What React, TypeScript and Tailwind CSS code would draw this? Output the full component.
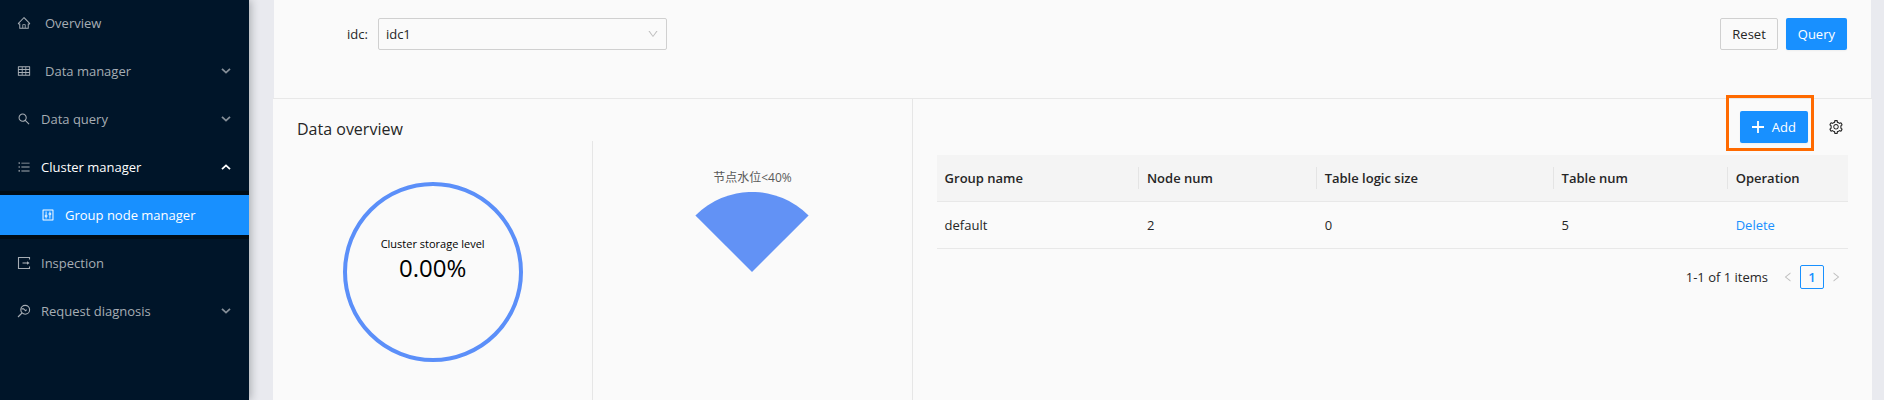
import type { ReactNode } from "react";
import {
  AiOutlineControl,
  AiOutlineDown,
  AiOutlineHome,
  AiOutlineLeft,
  AiOutlineRight,
  AiOutlineSearch,
  AiOutlineSetting,
  AiOutlineTable,
  AiOutlineUnorderedList,
} from "react-icons/ai";

const columns = ["Group name", "Node num", "Table logic size", "Table num", "Operation"];
const rows = [{ name: "default", nodes: 2, size: 0, tables: 5 }];

function InspectionIcon() {
  return (
    <svg viewBox="0 0 14 14" className="size-3.5 shrink-0" fill="none" stroke="currentColor" aria-hidden>
      <path d="M12.5 3.5v-2H1.5v11h11v-2" strokeWidth="1.1" />
      <path d="M5.5 7H11" strokeWidth="1.1" />
      <path d="M10 5.2 12.6 7 10 8.8Z" fill="currentColor" stroke="none" />
    </svg>
  );
}

function DiagnosisIcon() {
  return (
    <svg
      viewBox="0 0 14 14"
      className="size-3.5 shrink-0"
      fill="none"
      stroke="currentColor"
      strokeWidth="1.1"
      aria-hidden
    >
      <circle cx="8.2" cy="5.8" r="4.4" />
      <path d="M5 9 1 13" />
      <path d="M4.4 4.9h2.2l2 1.9 1-1.1" />
    </svg>
  );
}

type MenuItemProps = {
  icon: ReactNode;
  label: string;
  wide?: boolean;
  arrow?: "up" | "down";
  active?: boolean;
};

function MenuItem({ icon, label, wide, arrow, active }: MenuItemProps) {
  const className = `flex h-12 w-full items-center pl-[17px] pr-[18px] text-left ${
    active ? "text-white" : "text-[#a6adb4]"
  }`;
  const content = (
    <>
      {icon}
      <span className={wide ? "ml-3.5" : "ml-2.5"}>{label}</span>
    </>
  );

  if (!arrow) {
    return (
      <a href="#" className={className}>
        {content}
      </a>
    );
  }

  return (
    <button type="button" className={className} aria-expanded={arrow === "up"}>
      {content}
      <svg
        viewBox="0 0 10 6"
        className={`ml-auto h-1.5 w-2.5 ${arrow === "up" ? "rotate-180" : "opacity-80"}`}
        fill="none"
        stroke="currentColor"
        strokeWidth="1.8"
        aria-hidden
      >
        <path d="M1 .8 5 4.6 9 .8" />
      </svg>
    </button>
  );
}

function Sidebar() {
  return (
    <aside className="z-10 w-[249px] shrink-0 bg-[#001529] shadow-[2px_0_8px_rgba(29,35,41,0.3)]">
      <nav aria-label="Main" className="-mt-px">
        <MenuItem wide icon={<AiOutlineHome className="size-3.5" />} label="Overview" />
        <MenuItem wide arrow="down" icon={<AiOutlineTable className="size-3.5" />} label="Data manager" />
        <MenuItem arrow="down" icon={<AiOutlineSearch className="size-3.5" />} label="Data query" />
        <MenuItem
          active
          arrow="up"
          icon={<AiOutlineUnorderedList className="size-3.5 text-[#a6adb4]" />}
          label="Cluster manager"
        />
        <div className="bg-[#000c17] py-1">
          <a href="#" className="flex h-10 items-center gap-2.5 bg-[#1890ff] pl-[41px] text-white">
            <AiOutlineControl className="size-3.5" />
            Group node manager
          </a>
        </div>
        <MenuItem icon={<InspectionIcon />} label="Inspection" />
        <MenuItem arrow="down" icon={<DiagnosisIcon />} label="Request diagnosis" />
      </nav>
    </aside>
  );
}

function FilterBar() {
  return (
    <form className="flex h-[98px] items-start justify-between pl-[73px] pr-6 pt-[18px]">
      <div className="flex items-center gap-2.5">
        <label htmlFor="idc">idc:</label>
        <div className="relative">
          <select
            id="idc"
            className="h-8 w-[289px] appearance-none rounded-xs border border-[#d0d0d0] bg-[#fafafa] px-[7px]"
          >
            <option>idc1</option>
          </select>
          <AiOutlineDown className="pointer-events-none absolute right-2 top-2.5 size-3 text-[#bfbfbf]" />
        </div>
      </div>
      <div className="flex gap-2">
        <button type="button" className="h-8 rounded-xs border border-[#d0d0d0] px-[11px]">
          Reset
        </button>
        <button type="submit" className="h-8 rounded-xs bg-[#1890ff] px-3 text-white shadow-xs">
          Query
        </button>
      </div>
    </form>
  );
}

function DataOverview() {
  return (
    <section className="flex w-[40%] flex-col border-r border-[#e6e6e6]">
      <h2 className="px-6 pt-[18px] text-base leading-6">Data overview</h2>
      <div className="flex flex-1">
        <div className="flex w-1/2 justify-center pt-[41px]">
          <div className="flex size-[180px] flex-col items-center rounded-full border-4 border-[#5b8ff9] pt-12 text-black">
            <span className="text-[11px] leading-5">Cluster storage level</span>
            <span className="text-2xl leading-7">0.00%</span>
          </div>
        </div>
        <div className="flex w-1/2 flex-col items-center border-l border-[#e6e6e6] pt-[27px]">
          <span className="text-xs leading-5 text-[#595959]">节点水位&lt;40%</span>
          <svg viewBox="0 0 114 80" className="mt-1 h-20 w-[114px]" role="img" aria-label="节点水位">
            <path d="M57 80 .4 23.4A80 80 0 0 1 113.6 23.4Z" fill="#6292f5" />
          </svg>
        </div>
      </div>
    </section>
  );
}

function GroupTable() {
  return (
    <section className="flex-1 px-6">
      <div className="flex items-center justify-end gap-5 pt-3 pb-3 pr-1">
        <div className="relative">
          <button
            type="button"
            className="flex h-8 items-center gap-2 rounded-xs bg-[#1890ff] px-3 text-white shadow-xs"
          >
            <svg viewBox="0 0 12 12" className="size-3" stroke="currentColor" strokeWidth="1.8" aria-hidden>
              <path d="M6 0v12M0 6h12" />
            </svg>
            Add
          </button>
          <span className="pointer-events-none absolute -bottom-2 -left-3.5 -right-1.5 -top-4 border-3 border-[#ff6a00]" />
        </div>
        <button type="button" aria-label="Table settings">
          <AiOutlineSetting className="size-4" />
        </button>
      </div>
      <table className="w-full table-fixed border-separate border-spacing-0 text-left">
        <colgroup>
          <col className="w-[22.2%]" />
          <col className="w-[19.5%]" />
          <col className="w-[26%]" />
          <col className="w-[19.1%]" />
          <col />
        </colgroup>
        <thead>
          <tr className="bg-[#f4f4f4]">
            {columns.map((column, i) => (
              <th key={column} className="h-[47px] border-b border-[#e8e8e8] font-semibold">
                <div
                  className={`flex h-[22px] items-center pl-2 ${
                    i < columns.length - 1 ? "border-r border-[#e4e4e4]" : ""
                  }`}
                >
                  {column}
                </div>
              </th>
            ))}
          </tr>
        </thead>
        <tbody>
          {rows.map((row) => (
            <tr key={row.name} className="[&>td]:h-[47px] [&>td]:border-b [&>td]:border-[#e8e8e8] [&>td]:pl-2">
              <td>{row.name}</td>
              <td>{row.nodes}</td>
              <td>{row.size}</td>
              <td>{row.tables}</td>
              <td>
                <a href="#" className="text-[#1890ff]">
                  Delete
                </a>
              </td>
            </tr>
          ))}
        </tbody>
      </table>
      <nav aria-label="Pagination" className="mt-4 flex items-center justify-end">
        <span className="mr-2">1-1 of 1 items</span>
        <button type="button" aria-label="Previous page" className="flex size-6 items-center justify-center text-[#bfbfbf]">
          <AiOutlineLeft className="size-3" />
        </button>
        <button
          type="button"
          aria-current="page"
          className="flex size-6 items-center justify-center rounded-xs border border-[#1890ff] font-semibold text-[#1890ff]"
        >
          1
        </button>
        <button type="button" aria-label="Next page" className="flex size-6 items-center justify-center text-[#bfbfbf]">
          <AiOutlineRight className="size-3" />
        </button>
      </nav>
    </section>
  );
}

export default function App() {
  return (
    <div className="flex min-h-screen bg-[#e9eaef] font-['Open_Sans','Noto_Sans_CJK_SC',sans-serif] text-[13px] leading-5 text-[#262626]">
      <Sidebar />
      <main className="flex flex-1 flex-col pl-6 pr-3">
        <div className="mx-px bg-[#fafafa]">
          <FilterBar />
        </div>
        <div className="flex flex-1 border-t border-[#e8e8e8] bg-[#fafafa]">
          <DataOverview />
          <GroupTable />
        </div>
      </main>
    </div>
  );
}
